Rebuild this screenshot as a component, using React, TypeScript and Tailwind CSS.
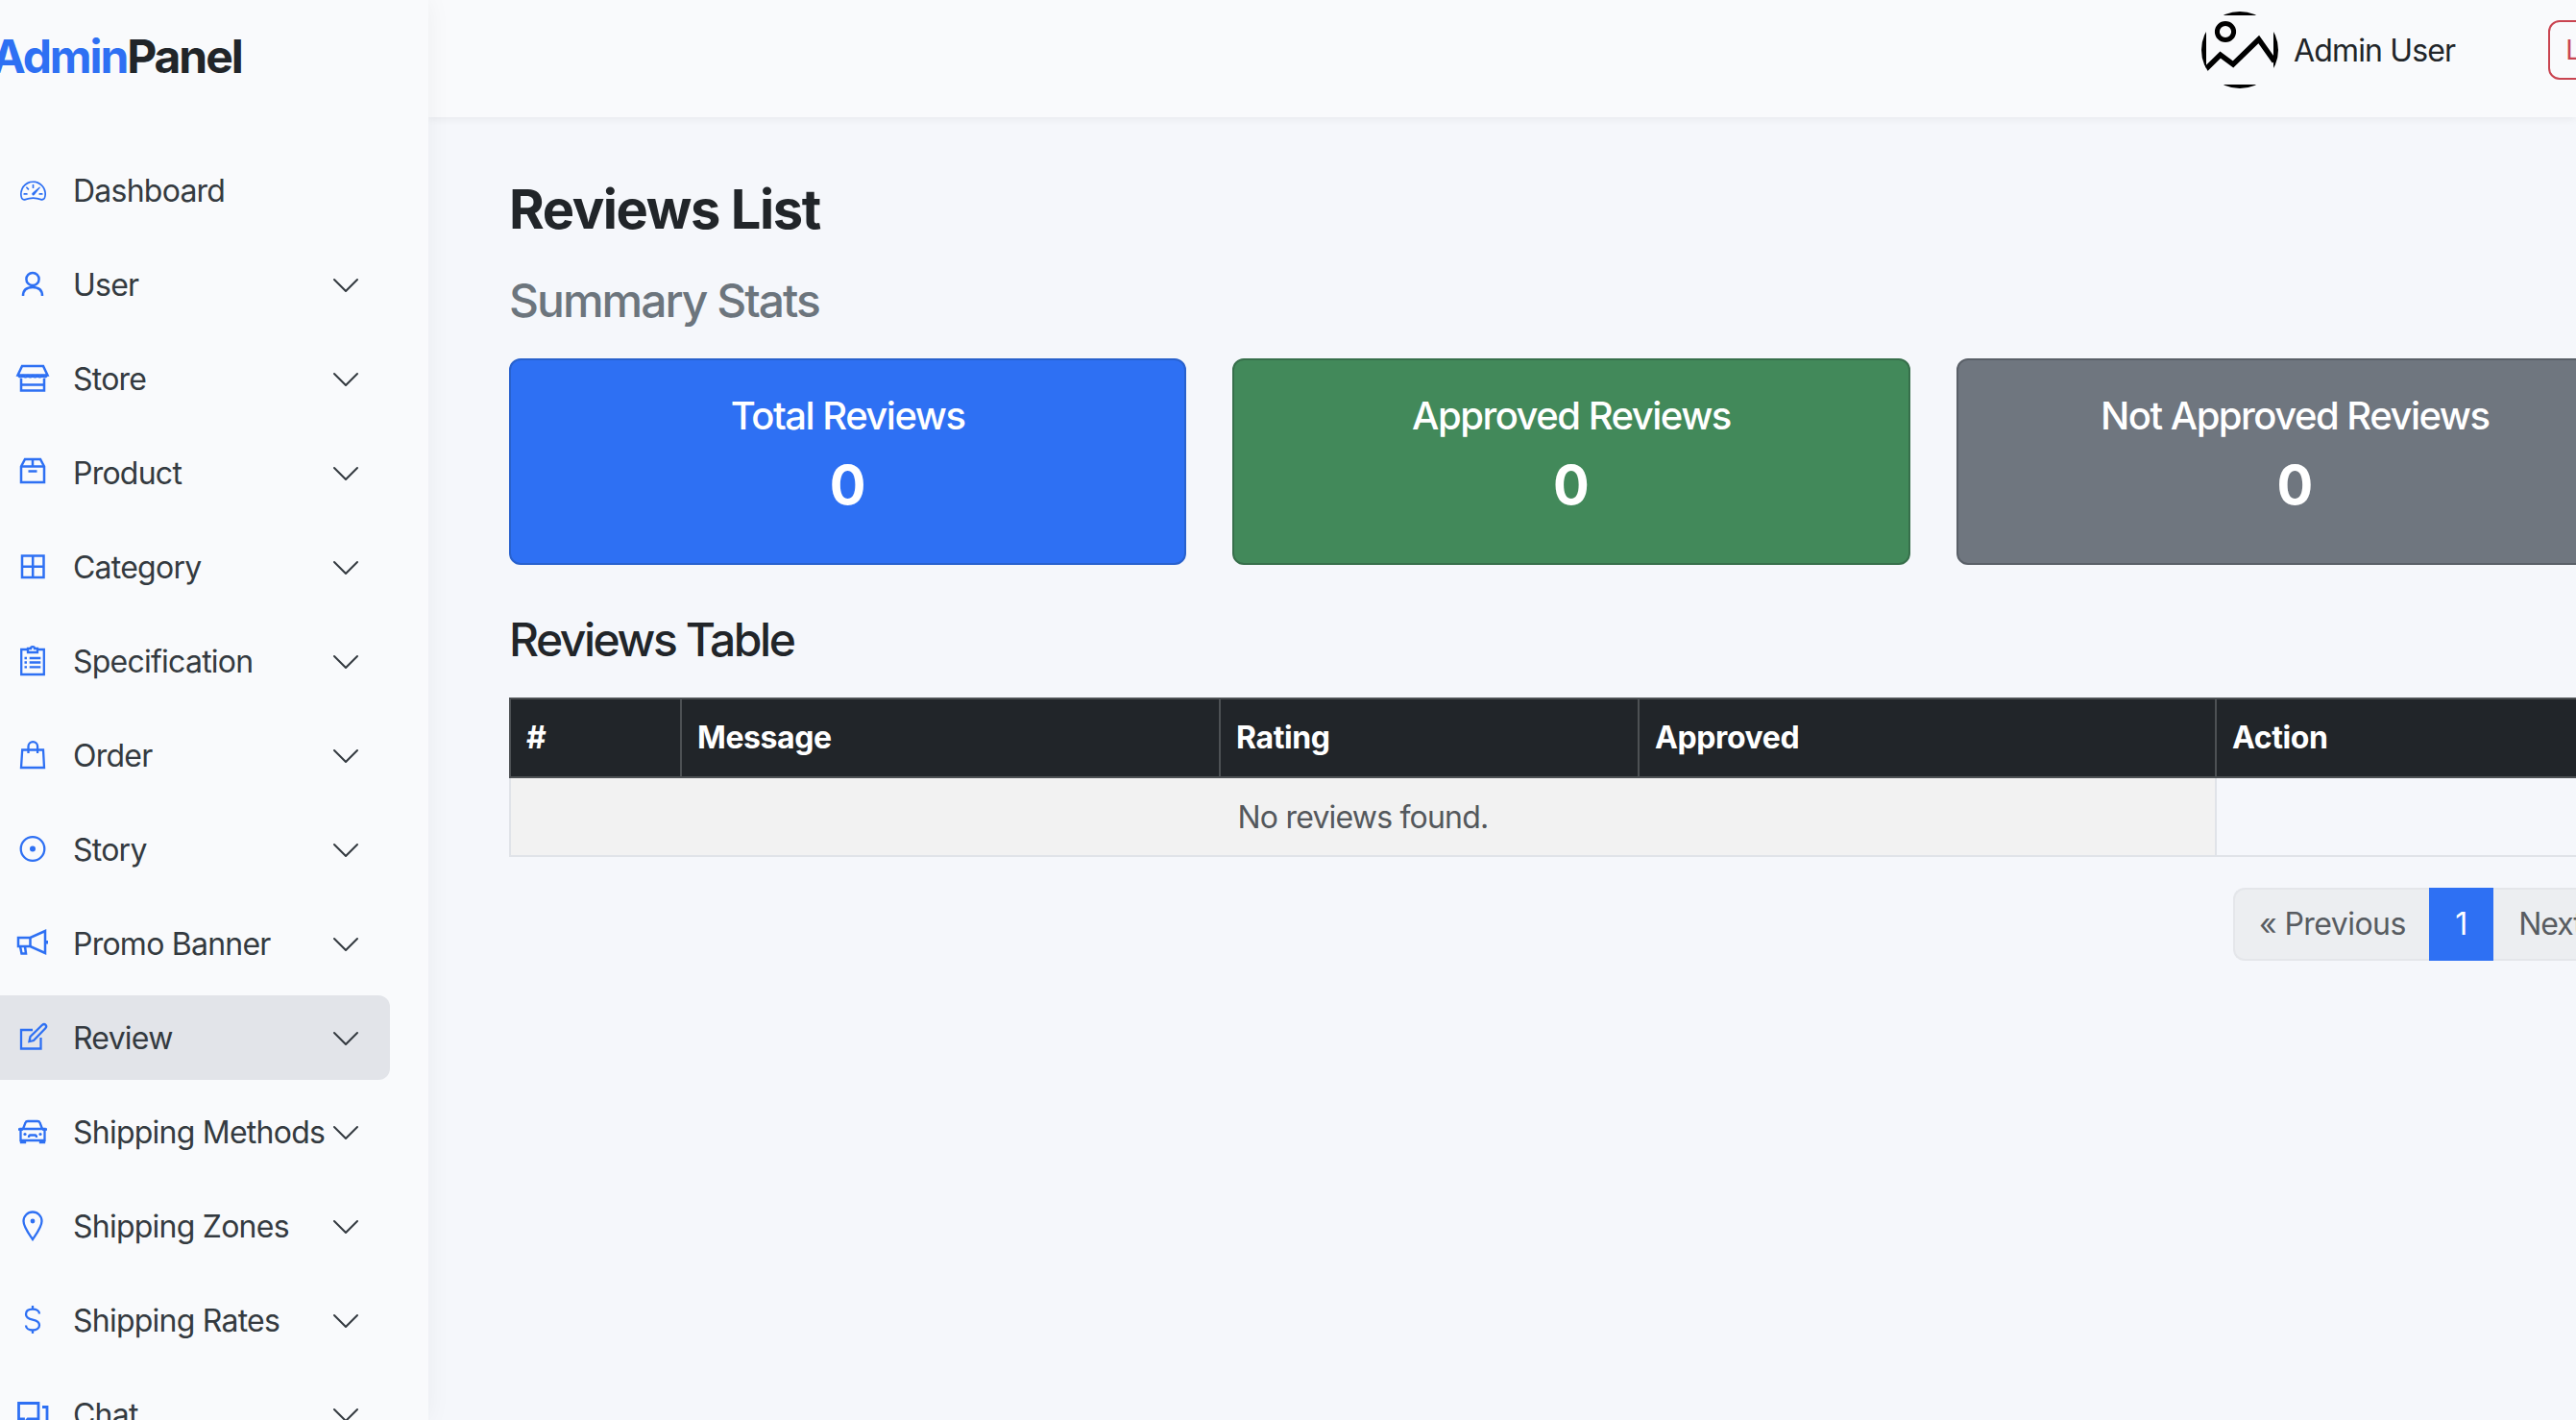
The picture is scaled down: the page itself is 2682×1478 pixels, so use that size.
import type { ReactNode } from "react";
import { BsSpeedometer2, BsChevronDown } from "react-icons/bs";

function Line({ children, w = 2.5 }: { children: ReactNode; w?: number }) {
  return (
    <svg viewBox="0 0 36 36" className="w-[36px] h-[36px]" fill="none" stroke="currentColor" strokeWidth={w}>
      {children}
    </svg>
  );
}

const navItems: { label: string; icon: ReactNode; chevron?: boolean; active?: boolean }[] = [
  { label: "Dashboard", icon: <BsSpeedometer2 className="w-[27px] h-[27px]" /> },
  {
    label: "User",
    chevron: true,
    icon: (
      <Line>
        <circle cx="18" cy="12.5" r="6.6" />
        <path d="M8 30C8 24 12 21 18 21C24 21 28 24 28 30" />
      </Line>
    ),
  },
  {
    label: "Store",
    chevron: true,
    icon: (
      <Line>
        <path d="M7 5H29L33.5 14.5H2.5Z" />
        <path d="M3 15q2.5 3 5 0q2.5 3 5 0q2.5 3 5 0q2.5 3 5 0q2.5 3 5 0q2.5 3 5 0" strokeWidth="2" />
        <path d="M6 18V30.5H30V18M6 24.5H30" />
      </Line>
    ),
  },
  {
    label: "Product",
    chevron: true,
    icon: (
      <Line>
        <path d="M6 11.5L10 4H26L30 11.5V28H6Z" />
        <path d="M6 11.5H30M18 4V11.5M13.5 16.5H22.5" />
      </Line>
    ),
  },
  {
    label: "Category",
    chevron: true,
    icon: (
      <Line>
        <path d="M7 6.5H29.5V29H7ZM18.2 6.5V29M7 17.7H29.5" />
      </Line>
    ),
  },
  {
    label: "Specification",
    chevron: true,
    icon: (
      <Line w={2.3}>
        <path d="M13 6H6.2V32H29.8V6H23" />
        <path d="M13 9V5H16C16 2.5 20 2.5 20 5H23V9Z" />
        <path d="M14.7 15H26.3M14.7 19.5H26.3M14.7 24.3H26.3M9.5 15H12M9.5 19.5H12M9.5 24.3H12" />
      </Line>
    ),
  },
  {
    label: "Order",
    chevron: true,
    icon: (
      <Line w={2.3}>
        <path d="M7.2 12.5H29L30 31H6Z" />
        <path d="M13.5 16V9a4.8 4.8 0 0 1 9.6 0V16" />
      </Line>
    ),
  },
  {
    label: "Story",
    chevron: true,
    icon: (
      <Line w={2.3}>
        <circle cx="18" cy="17.5" r="12.3" />
        <circle cx="18" cy="17.5" r="3" fill="currentColor" stroke="none" />
      </Line>
    ),
  },
  {
    label: "Promo Banner",
    chevron: true,
    icon: (
      <Line>
        <path d="M3 12H15.5L31 5V28L15.5 21H3Z" />
        <path d="M15.5 12V21M5 21L6.5 28.5H11L10 21" />
        <path d="M33 15V18.5" strokeWidth="2" />
      </Line>
    ),
  },
  {
    label: "Review",
    chevron: true,
    active: true,
    icon: (
      <Line w={2.3}>
        <path d="M18 10H6V29.5H26.5V18" />
        <path d="M14.5 22L15.5 17L28 4.8Q30 3.2 31.5 4.8Q33 6.5 31.3 8.2L19 21Z" />
      </Line>
    ),
  },
  {
    label: "Shipping Methods",
    chevron: true,
    icon: (
      <Line w={2.3}>
        <path d="M8 15L10.5 8.5Q11 7 13 7H23Q25 7 25.5 8.5L28 15" />
        <path d="M5.5 15H30.5V27H5.5Z" />
        <path d="M3 15.5H8M28 15.5H33M6 27V29H10V27M26 27V29H30V27" />
        <path d="M14 24Q14 21.5 15.5 21.5H20.5Q22 21.5 22 24" />
        <circle cx="10" cy="20.5" r="1.6" fill="currentColor" stroke="none" />
        <circle cx="26" cy="20.5" r="1.6" fill="currentColor" stroke="none" />
      </Line>
    ),
  },
  {
    label: "Shipping Zones",
    chevron: true,
    icon: (
      <Line w={2.3}>
        <path d="M18 32C14 26 8.5 19 8.5 13A9.5 9.5 0 0 1 27.5 13C27.5 19 22 26 18 32Z" />
        <circle cx="18" cy="13" r="2.4" fill="currentColor" stroke="none" />
      </Line>
    ),
  },
  {
    label: "Shipping Rates",
    chevron: true,
    icon: (
      <Line w={2.3}>
        <path d="M25 11.5C25 8.5 22 6.7 18 6.7C14 6.7 11 8.5 11 12C11 15.5 14 16.8 18 17.6C22 18.4 25 20 25 23.3C25 26.5 22 28.5 18 28.5C14 28.5 11 26.5 11 23.5" />
        <path d="M18 3V6.7M18 28.5V32" />
      </Line>
    ),
  },
  {
    label: "Chat",
    chevron: true,
    icon: (
      <Line w={2.8}>
        <path d="M3.5 6.5H24V23H13L8.5 28V23H3.5Z" />
        <path d="M28 10.5H33V30" />
      </Line>
    ),
  },
];

function Sidebar() {
  return (
    <aside className="w-[446px] h-[1478px] shrink-0 bg-[#f9fafc] shadow-[0_0_24px_rgba(0,0,0,0.05)] z-20 overflow-hidden">
      <div className="h-[122px] flex items-center -ml-[9px] pb-[4px] text-[48px] font-bold tracking-[-2.1px]">
        <span className="text-[#2e70f3]">Admin</span>
        <span className="text-[#212529]">Panel</span>
      </div>
      <nav className="mt-[32px] flex flex-col gap-[10px] w-[406px]">
        {navItems.map((item) => (
          <div
            key={item.label}
            className={`h-[88px] shrink-0 flex items-center pl-[16px] pr-[30px] text-[32px] tracking-[-0.76px] text-[#343a40] rounded-r-[12px] ${item.active ? "bg-[#e2e4e9]" : ""}`}
          >
            <span className="w-[36px] h-[36px] shrink-0 flex items-center justify-center text-[#2e70f3]">{item.icon}</span>
            <span className="ml-[24px] pt-[1px] flex-1 whitespace-nowrap">{item.label}</span>
            {item.chevron && <BsChevronDown className="w-[32px] h-[32px] mt-[2px] shrink-0 text-[#343a40]" />}
          </div>
        ))}
      </nav>
    </aside>
  );
}

function Avatar() {
  return (
    <svg viewBox="0 0 80 80" className="w-[80px] h-[80px] shrink-0">
      <defs>
        <clipPath id="avatar-clip">
          <circle cx="40" cy="40" r="40" />
        </clipPath>
      </defs>
      <g clipPath="url(#avatar-clip)" fill="none" stroke="#000">
        <rect x="-5" y="-6" width="90" height="92" strokeWidth="20" />
        <circle cx="25" cy="21" r="8.6" strokeWidth="5" />
        <path d="M4.5 60L19.7 45L33 55L59.7 29L76 52" strokeWidth="5.5" />
      </g>
    </svg>
  );
}

function Header() {
  return (
    <header className="h-[122px] shrink-0 bg-[#f9fafc] shadow-[0_2px_8px_rgba(0,0,0,0.06)] z-10 overflow-hidden pt-[12px] pl-[1846px]">
      <div className="flex items-center w-[500px] h-[80px]">
        <Avatar />
        <span className="ml-[16px] pt-[2px] text-[32px] tracking-[-0.85px] text-[#212529]">Admin User</span>
        <button className="ml-[97px] h-[62px] px-[16px] border-2 border-[#c94450] rounded-[12px] text-[28px] text-[#c94450]">
          Logout
        </button>
      </div>
    </header>
  );
}

const stats = [
  { title: "Total Reviews", bg: "bg-[#2e70f3] border-[#2861cd]" },
  { title: "Approved Reviews", bg: "bg-[#42895a] border-[#376f4b]" },
  { title: "Not Approved Reviews", bg: "bg-[#6f767f] border-[#5a6068]" },
];

function StatCard({ title, bg }: { title: string; bg: string }) {
  return (
    <div className={`flex-1 h-[215px] border-2 rounded-[12px] text-white text-center pt-[34px] ${bg}`}>
      <div className="text-[40px] font-[550] leading-[48px] tracking-[-1.5px]">{title}</div>
      <div className="mt-[14px] text-[56px] font-bold leading-[68px]">0</div>
    </div>
  );
}

function ReviewsTable() {
  return (
    <table className="mt-[31px] w-[2212px] table-fixed border-collapse text-[32px] leading-[48px]">
      <thead className="bg-[#212529] text-white tracking-[-0.4px]">
        <tr className="h-[82px]">
          <th className="w-[178px] text-left px-[16px] border-2 border-[#4d5154] font-bold">#</th>
          <th className="w-[561px] text-left px-[16px] border-2 border-[#4d5154] font-bold">Message</th>
          <th className="w-[436px] text-left px-[16px] border-2 border-[#4d5154] font-bold">Rating</th>
          <th className="w-[601px] text-left px-[16px] border-2 border-[#4d5154] font-bold">Approved</th>
          <th className="text-left px-[16px] border-2 border-[#4d5154] font-bold">Action</th>
        </tr>
      </thead>
      <tbody>
        <tr className="h-[82px]">
          <td colSpan={4} className="bg-[#f2f2f2] text-[#54585c] text-center tracking-[-0.8px] pt-[2px] border-2 border-[#e0e3e8]">
            No reviews found.
          </td>
          <td className="border-2 border-[#e0e3e8]" />
        </tr>
      </tbody>
    </table>
  );
}

function Pagination() {
  return (
    <div className="mt-[32px] flex justify-end text-[32px] leading-[48px]">
      <div className="flex h-[76px] items-stretch">
        <span className="flex items-center justify-center w-[204px] tracking-[-0.55px] bg-[#eceef1] border-2 border-r-0 border-[#e4e6ea] rounded-l-[12px] text-[#585c61] whitespace-nowrap">
          « Previous
        </span>
        <span className="flex items-center justify-center w-[67px] bg-[#2e70f3] text-white">1</span>
        <span className="flex items-center px-[26px] tracking-[-1.1px] bg-[#eceef1] border-2 border-l-0 border-[#e4e6ea] rounded-r-[12px] text-[#585c61] whitespace-nowrap">
          Next »
        </span>
      </div>
    </div>
  );
}

export default function App() {
  return (
    <div className="flex w-[2682px] h-[1478px] overflow-hidden bg-[#f5f7fb]" style={{ fontFamily: "Inter, sans-serif" }}>
      <Sidebar />
      <div className="flex-1 min-w-0 flex flex-col">
        <Header />
        <main className="flex-1 overflow-hidden pl-[84px] pt-[64px]">
          <div className="w-[2212px]">
            <h2 className="text-[56px] font-bold leading-[64px] tracking-[-1.4px] text-[#212529]">Reviews List</h2>
            <h4 className="mt-[34px] text-[48px] font-[550] leading-[58px] tracking-[-2px] text-[#6c757d]">Summary Stats</h4>
            <div className="mt-[31px] flex gap-[48px]">
              {stats.map((s) => (
                <StatCard key={s.title} title={s.title} bg={s.bg} />
              ))}
            </div>
            <h4 className="mt-[49px] text-[48px] font-[550] leading-[58px] tracking-[-2.45px] text-[#212529]">Reviews Table</h4>
            <ReviewsTable />
            <Pagination />
          </div>
        </main>
      </div>
    </div>
  );
}
